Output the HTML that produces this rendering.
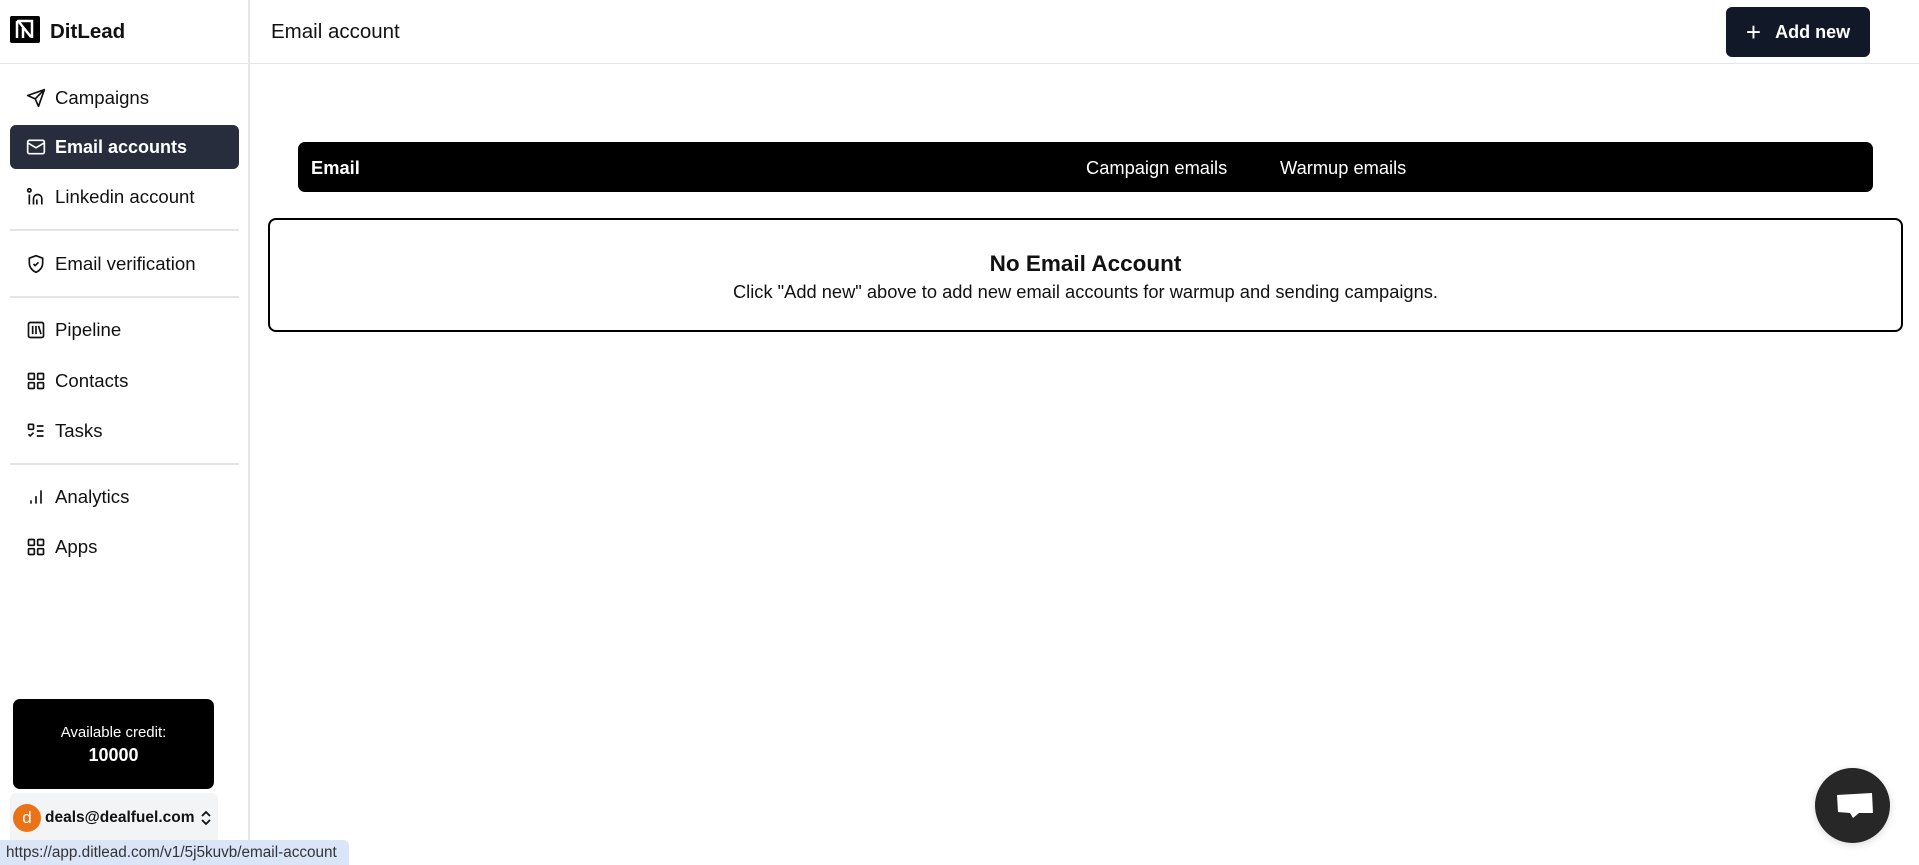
<!DOCTYPE html>
<html><head><meta charset="utf-8"><style>
*{box-sizing:border-box;margin:0;padding:0}
body{width:1919px;height:865px;overflow:hidden;background:#fff;font-family:"Liberation Sans",sans-serif;color:#111;position:relative}
.side{position:absolute;left:0;top:0;width:250px;height:865px;border-right:2px solid #e5e7eb}
.logo{position:absolute;left:10px;top:16px;width:30px;height:27px;background:#000;border-radius:2px}
.brand{position:absolute;left:50px;top:20px;font-size:20.5px;font-weight:bold}
.hline{position:absolute;left:0;top:63px;width:1919px;height:1px;background:#e5e7eb}
.nav{position:absolute;left:10px;width:229px;height:44px;display:flex;align-items:center;padding-left:16px;font-size:18.6px;color:#111;border-radius:6px}
.nav svg{width:20px;height:20px;margin-right:9px;flex:none}
.nav.act{background:#272d3d;color:#fff;font-weight:bold;font-size:18px}
.sep{position:absolute;left:10px;width:229px;height:2px;background:#e2e4e8}
.credit{position:absolute;left:13px;top:699px;width:201px;height:90px;background:#000;border-radius:7px;color:#fff;text-align:center;padding-top:25px;font-size:15px}
.credit b{display:block;font-size:18px;margin-top:4px}
.user{position:absolute;left:10px;top:793px;width:208px;height:50px;background:#f3f4f6;border-radius:6px}
.av{position:absolute;left:3px;top:11px;width:28px;height:28px;border-radius:50%;background:#ea7317;color:#fff;font-size:17px;text-align:center;line-height:27px}
.uname{position:absolute;left:35px;top:16px;font-size:15.5px;font-weight:bold}
.status{position:absolute;left:0;top:840px;width:349px;height:25px;background:#dbe5f8;border-radius:0 6px 0 0;font-size:15.3px;color:#333;padding:4px 0 0 6px;white-space:nowrap}
.title{position:absolute;left:271px;top:20px;font-size:20.5px}
.btn{position:absolute;left:1726px;top:7px;width:144px;height:50px;background:#111827;border-radius:6px;color:#fff;font-size:18px;font-weight:bold;display:flex;align-items:center;justify-content:center}
.th{position:absolute;left:298px;top:142px;width:1575px;height:50px;background:#000;border-radius:7px;color:#fff;font-size:18.3px}
.th span{position:absolute;top:15px}
.box{position:absolute;left:268px;top:218px;width:1635px;height:114px;border:2px solid #000;border-radius:8px;text-align:center}
.box h2{font-size:22.5px;margin-top:31px}
.box p{font-size:18.3px;margin-top:4px}
.chat{position:absolute;left:1815px;top:768px;width:75px;height:75px;border-radius:50%;background:#272727;box-shadow:0 2px 8px rgba(0,0,0,.15)}
</style></head><body>
<div class="side">
<div class="logo"><svg width="30" height="27" viewBox="0 0 30 27"><path d="M7 5v17M7 5h15v17M9 6l12 15M13 12v10" stroke="#fff" stroke-width="2.5" fill="none"/></svg></div>
<div class="brand">DitLead</div>
<div class="nav" style="top:76px"><svg viewBox="0 0 24 24" fill="none" stroke="#111" stroke-width="2" stroke-linejoin="round"><path d="M22 2L11 13M22 2l-7 20-4-9-9-4z"/></svg>Campaigns</div>
<div class="nav act" style="top:125px"><svg viewBox="0 0 24 24" fill="none" stroke="#fff" stroke-width="2"><rect x="2" y="4" width="20" height="16" rx="2"/><path d="M2 7l10 6 10-6"/></svg>Email accounts</div>
<div class="nav" style="top:175px"><svg viewBox="0 0 24 24" fill="none" stroke="#111" stroke-width="2"><circle cx="4" cy="4" r="2"/><path d="M4 9v12M9 21v-7a5 5 0 0 1 10 0v7M13 21v-6"/></svg>Linkedin account</div>
<div class="sep" style="top:229px"></div>
<div class="nav" style="top:242px"><svg viewBox="0 0 24 24" fill="none" stroke="#111" stroke-width="2" stroke-linejoin="round"><path d="M12 2l8 3v6c0 5-3.5 9-8 11-4.5-2-8-6-8-11V5z"/><path d="M9 12l2 2 4-4"/></svg>Email verification</div>
<div class="sep" style="top:296px"></div>
<div class="nav" style="top:308px"><svg viewBox="0 0 24 24" fill="none" stroke="#111" stroke-width="2"><rect x="3" y="3" width="18" height="18" rx="2"/><path d="M8 7v10M12 7v10M15 7l3 10"/></svg>Pipeline</div>
<div class="nav" style="top:359px"><svg viewBox="0 0 24 24" fill="none" stroke="#111" stroke-width="2"><rect x="3" y="3" width="7" height="7" rx="1"/><rect x="14" y="3" width="7" height="7" rx="1"/><rect x="3" y="14" width="7" height="7" rx="1"/><rect x="14" y="14" width="7" height="7" rx="1"/></svg>Contacts</div>
<div class="nav" style="top:409px"><svg viewBox="0 0 24 24" fill="none" stroke="#111" stroke-width="2"><rect x="3" y="4" width="6" height="6" rx="1"/><path d="M3 16l2 2 4-4M13 6h8M13 12h8M13 18h8"/></svg>Tasks</div>
<div class="sep" style="top:463px"></div>
<div class="nav" style="top:475px"><svg viewBox="0 0 24 24" fill="none" stroke="#111" stroke-width="2"><path d="M6 20v-4M12 20v-9M18 20V4"/></svg>Analytics</div>
<div class="nav" style="top:525px"><svg viewBox="0 0 24 24" fill="none" stroke="#111" stroke-width="2"><rect x="3" y="3" width="7" height="7" rx="1"/><rect x="14" y="3" width="7" height="7" rx="1"/><rect x="3" y="14" width="7" height="7" rx="1"/><rect x="14" y="14" width="7" height="7" rx="1"/></svg>Apps</div>
<div class="credit">Available credit:<b>10000</b></div>
<div class="user"><div class="av">d</div><div class="uname">deals@dealfuel.com</div><svg style="position:absolute;left:190px;top:17px" width="12" height="16" viewBox="0 0 12 16" fill="none" stroke="#111" stroke-width="1.8"><path d="M2 6l4-4 4 4M2 10l4 4 4-4"/></svg></div>
</div>
<div class="hline"></div>
<div class="status">https://app.ditlead.com/v1/5j5kuvb/email-account</div>
<div class="title">Email account</div>
<div class="btn"><span style="font-weight:normal;font-size:26px;margin-right:14px;line-height:1">+</span>Add new</div>
<div class="th"><span style="left:13px;font-weight:bold">Email</span><span style="left:788px">Campaign emails</span><span style="left:982px">Warmup emails</span></div>
<div class="box"><h2>No Email Account</h2><p>Click "Add new" above to add new email accounts for warmup and sending campaigns.</p></div>
<div class="chat"><svg width="75" height="75" viewBox="0 0 75 75"><path d="M22 27l35-2 1 20-14 0-6 5-3-5-12-1z" fill="#fff"/></svg></div>
</body></html>
